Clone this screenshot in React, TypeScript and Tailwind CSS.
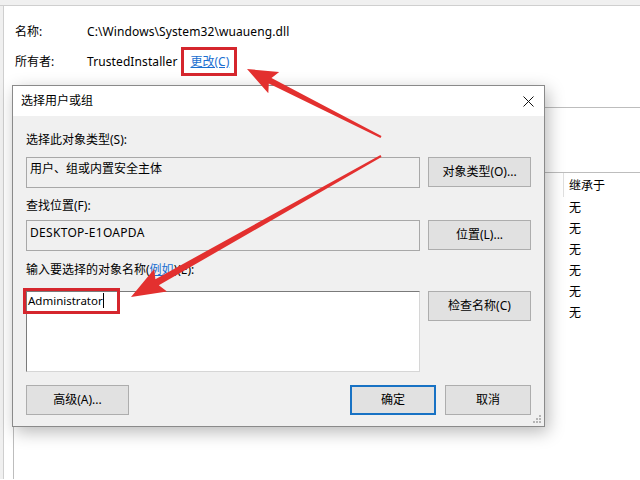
import React from "react";

function arrowPoints(sx: number, sy: number, tx: number, ty: number, L: number, W: number, w1: number, w0: number) {
  const dx = tx - sx;
  const dy = ty - sy;
  const len = Math.hypot(dx, dy);
  const ux = dx / len;
  const uy = dy / len;
  const nx = -uy;
  const ny = ux;
  const bx = tx - ux * L;
  const by = ty - uy * L;
  const pts = [
    [sx + (nx * w0) / 2, sy + (ny * w0) / 2],
    [bx + (nx * w1) / 2, by + (ny * w1) / 2],
    [bx + nx * W - ux * 4, by + ny * W - uy * 4],
    [tx, ty],
    [bx - nx * W - ux * 4, by - ny * W - uy * 4],
    [bx - (nx * w1) / 2, by - (ny * w1) / 2],
    [sx - (nx * w0) / 2, sy - (ny * w0) / 2],
  ];
  return pts.map((p) => `${p[0].toFixed(1)},${p[1].toFixed(1)}`).join(" ");
}

function Btn({ children, w, primary }: { children: React.ReactNode; w: string; primary?: boolean }) {
  return (
    <div
      className={
        "h-[30px] flex items-center justify-center bg-[#e1e1e1] leading-[16px] " +
        w +
        (primary ? " border-2 border-[#1872c4]" : " border border-[#adadad]")
      }
    >
      {children}
    </div>
  );
}

export default function App() {
  return (
    <div className="relative w-[640px] h-[480px] overflow-hidden bg-white text-[12px] text-black font-['Noto_Sans','Noto_Sans_CJK_SC',sans-serif]">
      {/* background property window */}
      <div className="h-[6px] bg-[#f0f0f0] border-b border-[#cfcfcf]" />
      <div className="flex h-[473px]">
        <div className="w-[4px] bg-[#f0f0f0] border-r border-[#cfcfcf]" />
        <div className="flex-1 flex flex-col">
          <div className="pl-[11px] mt-[18px] grid grid-cols-[72px_auto] gap-y-[14px] leading-[16px]">
            <div>名称:</div>
            <div className="tracking-[0.1px]">C:\Windows\System32\wuaueng.dll</div>
            <div>所有者:</div>
            <div className="flex gap-[13px]">
              <span className="tracking-[0.1px]">TrustedInstaller</span>
              <span className="text-[#1a6fd0] underline">更改(C)</span>
            </div>
          </div>
          <div className="ml-[8px] mt-[37px] border-t border-[#bdbdbd]" />
          <div className="ml-[9px] mt-[64px] flex-1 border-l border-t border-[#bdbdbd] flex flex-col">
            <div className="grid grid-cols-[549px_1fr] h-[24px]">
              <div />
              <div className="border-l border-[#e0e0e0] pl-[5px] pt-[1px] flex items-center">继承于</div>
            </div>
            {[0, 1, 2, 3, 4, 5].map((i) => (
              <div key={i} className="grid grid-cols-[549px_1fr] h-[21px] items-center">
                <div />
                <div className="pl-[6px]">无</div>
              </div>
            ))}
          </div>
        </div>
      </div>

      {/* dialog */}
      <div className="absolute left-[12px] top-[85px] w-[533px] h-[342px] border border-[#8a8a8a] bg-[#f0f0f0] shadow-[3px_5px_16px_rgba(0,0,0,0.28)] flex flex-col">
        <div className="h-[30px] bg-white flex items-center justify-between pl-[8px] pr-[10px]">
          <span className="leading-[16px]">选择用户或组</span>
          <svg width="11" height="11" viewBox="0 0 11 11">
            <path d="M0.5 0.5 L10.5 10.5 M10.5 0.5 L0.5 10.5" stroke="#111" strokeWidth="1" fill="none" />
          </svg>
        </div>
        <div className="relative flex-1 px-[13px] flex flex-col leading-[16px]">
          <div className="mt-[16px]">选择此对象类型(S):</div>
          <div className="mt-[9px] flex gap-[8px]">
            <div className="w-[394px] h-[31px] border border-[#a8a8a8] bg-[#f0f0f0] px-[3px] pt-[3px]">
              用户、组或内置安全主体
            </div>
            <Btn w="w-[103px]">对象类型(O)...</Btn>
          </div>
          <div className="mt-[10px]">查找位置(F):</div>
          <div className="mt-[6px] flex gap-[8px]">
            <div className="w-[394px] h-[31px] border border-[#a8a8a8] bg-[#f0f0f0] px-[3px] pt-[4px] tracking-[0.3px]">
              DESKTOP-E1OAPDA
            </div>
            <Btn w="w-[103px]">位置(L)...</Btn>
          </div>
          <div className="mt-[11px]">
            输入要选择的对象名称(<span className="text-[#1a6fd0] underline">例如</span>)(E):
          </div>
          <div className="mt-[13px] flex gap-[8px] items-start">
            <div className="w-[394px] h-[81px] border border-[#7a7a7a] border-r-[#d6d6d6] border-b-[#d6d6d6] bg-white px-[1px] pt-[1px] text-[11.5px]">
              <span>Administrator</span>
              <span className="inline-block w-px h-[15px] bg-black align-[-3px]" />
            </div>
            <Btn w="w-[103px]">检查名称(C)</Btn>
          </div>
          <div className="mt-[13px] flex justify-between">
            <Btn w="w-[103px]">高级(A)...</Btn>
            <div className="flex gap-[9px]">
              <Btn w="w-[86px]" primary>
                确定
              </Btn>
              <Btn w="w-[86px]">取消</Btn>
            </div>
          </div>
          <svg className="absolute right-[2px] bottom-[2px]" width="10" height="10" viewBox="0 0 10 10">
            <g fill="#b5b5b5">
              <rect x="7" y="1" width="2" height="2" />
              <rect x="4" y="4" width="2" height="2" />
              <rect x="7" y="4" width="2" height="2" />
              <rect x="1" y="7" width="2" height="2" />
              <rect x="4" y="7" width="2" height="2" />
              <rect x="7" y="7" width="2" height="2" />
            </g>
          </svg>
        </div>
      </div>

      {/* annotations */}
      <div className="absolute left-[181px] top-[47px] w-[56px] h-[29px] border-[3px] border-[#d5262d]" />
      <div className="absolute left-[23px] top-[288px] w-[97px] h-[26px] border-[3px] border-[#d5262d]" />
      <svg className="absolute left-0 top-0" width="640" height="480" viewBox="0 0 640 480">
        <polygon points={arrowPoints(381, 137, 247, 69, 26, 12, 6, 2)} fill="#e3302f" />
        <polygon points={arrowPoints(381, 156, 131, 297, 30, 13, 7, 2)} fill="#e3302f" />
      </svg>
    </div>
  );
}
